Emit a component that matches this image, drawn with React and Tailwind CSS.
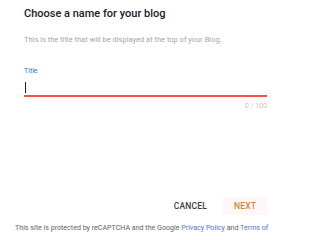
export default function App() {
  return (
    <div className="w-[293px] h-[236px] overflow-hidden bg-white font-['Roboto',sans-serif]">
      {/* Header */}
      <div className="pl-[24px] pr-[26px]">
        <h1 className="pt-[6px] text-[11px] leading-[16px] font-medium text-[#202124]">
          Choose a name for your blog
        </h1>
        <p className="mt-[12px] text-[7.5px] leading-[12px] text-[#a6a6a6]">
          This is the title that will be displayed at the top of your Blog.
        </p>

        {/* Title field */}
        <label className="mt-[20px] block text-[7px] leading-[10px] text-[#3b6fd4]">
          Title
        </label>
        <div className="flex items-start pt-[6px] pb-[2px]">
          <span className="ml-[0.5px] block w-px h-[11px] bg-[#202124]" />
        </div>
        <div className="h-[1.5px] bg-[#f4553a]" />
        <div className="mt-[4.5px] text-right text-[7px] leading-[10px] text-[#c6c6c6]">
          0 / 100
        </div>
      </div>

      {/* Actions */}
      <div className="mt-[86px] flex justify-end gap-[5px] pr-[26px]">
        <button className="h-[18px] px-[11px] text-[8.5px] font-medium tracking-[0.2px] text-[#3c3c3c]">
          CANCEL
        </button>
        <button className="h-[18px] w-[44px] bg-[#fef7f8] text-[8.5px] font-medium tracking-[0.2px] text-[#c78c34]">
          NEXT
        </button>
      </div>

      {/* Footer */}
      <p className="mt-[7px] px-[15px] text-[7.1px] leading-[12px] text-[#5f6368]">
        This site is protected by reCAPTCHA and the Google{" "}
        <span className="text-[#5c6ee0]">Privacy Policy</span> and{" "}
        <span className="text-[#5c6ee0]">Terms of</span>{" "}
        <span className="text-[#5c6ee0]">Service</span> apply.
      </p>
    </div>
  );
}
